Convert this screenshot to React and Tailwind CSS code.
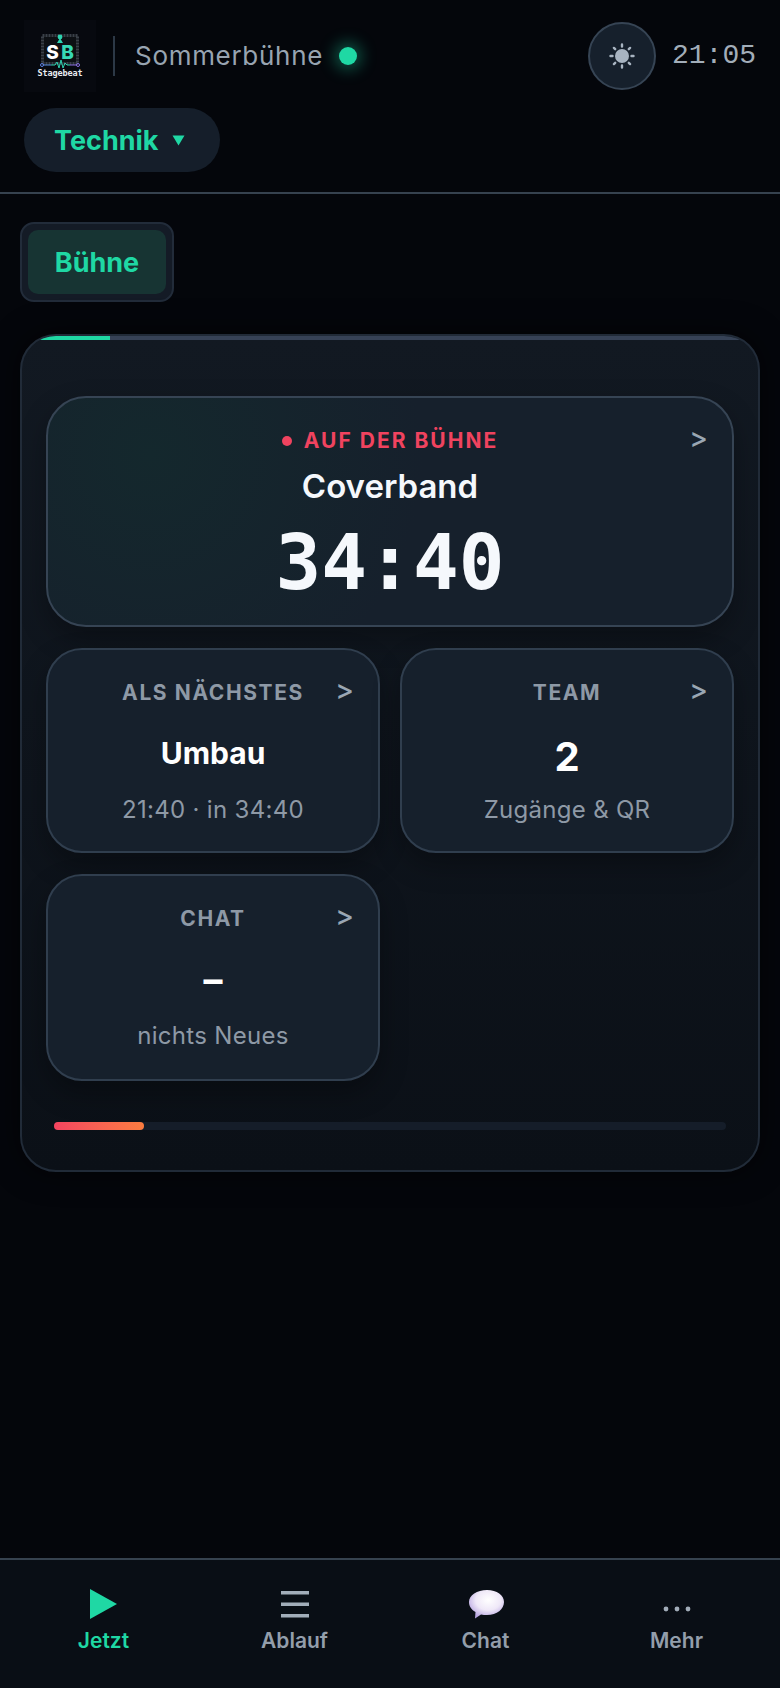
import React from 'react';

const sans = 'font-["Inter","Liberation_Sans",sans-serif]';

function Logo() {
    return (
        <div className="w-[72px] h-[72px] bg-[#07090f] flex items-center justify-center">
            <svg width="72" height="72" viewBox="0 0 72 72">
                <rect x="18.5" y="15.5" width="35" height="28" fill="#0d1014" stroke="#3a4048" strokeWidth="3" strokeDasharray="2 1" />
                <circle cx="36" cy="17" r="2.4" fill="#2dd4b0" />
                <path d="M33 23 L36 18 L39 23 Z" fill="#2dd4b0" />
                <text x="28.5" y="39" fontSize="19" fontWeight="800" fill="#ffffff" textAnchor="middle" fontFamily="Inter, sans-serif">S</text>
                <text x="43.5" y="39" fontSize="19" fontWeight="800" fill="#37d8b5" textAnchor="middle" fontFamily="Inter, sans-serif">B</text>
                <path d="M27 45 H31 L33 42 L35 48 L37 40 L39 48 L41 43 L43 45 H46" fill="none" stroke="#2dd4b0" strokeWidth="1" />
                <path d="M19 45 H27" stroke="#5b8fe0" strokeWidth="1" />
                <path d="M46 45 H53" stroke="#8a6fe0" strokeWidth="1" />
                <circle cx="18" cy="45" r="1.5" fill="none" stroke="#5b7fe0" />
                <circle cx="54" cy="45" r="1.5" fill="none" stroke="#8a6fe0" />
                <text x="36" y="56" fontSize="8.5" fontWeight="700" fill="#e8ecef" textAnchor="middle" fontFamily="'DejaVu Sans Mono', monospace" textLength="45">Stagebeat</text>
            </svg>
        </div>
    );
}

function SunIcon() {
    return (
        <svg width="26" height="26" viewBox="0 0 26 26" fill="none" stroke="#a8b4c1" strokeWidth="2.4" strokeLinecap="round">
            <circle cx="13" cy="13" r="7" fill="#a8b4c1" stroke="none" />
            <path d="M13 1.5V3.5M13 22.5V24.5M1.5 13H3.5M22.5 13H24.5M4.9 4.9L6.2 6.2M19.8 19.8L21.1 21.1M4.9 21.1L6.2 19.8M19.8 6.2L21.1 4.9" />
        </svg>
    );
}

function Arrow() {
    return <span className="absolute right-[24px] top-[24px] text-[28px] leading-[32px] font-medium text-[#9aa6b3]">&gt;</span>;
}

function SmallCard({ label, value, sub, valueClass, className }) {
    return (
        <div className={`relative rounded-[36px] border-2 border-[#303e4e] bg-[#16202c] flex flex-col items-center pt-[29px] shadow-[0_12px_28px_rgba(0,0,0,0.3)] ${className}`}>
            <Arrow />
            <div className="text-[21px] leading-[28px] font-bold tracking-[1.6px] text-[#8e99a6]">{label}</div>
            <div className={`mt-[21px] h-[50px] leading-[50px] font-bold text-white ${valueClass}`}>{value}</div>
            <div className="mt-[18px] text-[24px] leading-[28px] tracking-[0.3px] text-[#8e99a6]">{sub}</div>
        </div>
    );
}

function NavItem({ icon, label, active }) {
    return (
        <div className="flex-1 flex flex-col items-center">
            <div className="h-[36px] flex items-center justify-center">{icon}</div>
            <div className={`mt-[6px] text-[21px] leading-[26px] font-semibold ${active ? 'text-[#1fd8a4]' : 'text-[#939eab]'}`}>{label}</div>
        </div>
    );
}

export default function App() {
    return (
        <div className={`w-[780px] h-[1688px] bg-[#04060b] flex flex-col ${sans}`}>
            {/* header */}
            <header className="border-b-2 border-[#36424f] h-[194px] shrink-0 px-[24px] pt-[20px]">
                <div className="flex items-center h-[72px]">
                    <Logo />
                    <div className="ml-[17px] w-[2px] h-[40px] bg-[#2c3846]" />
                    <span className="ml-[20px] text-[26px] leading-[32px] tracking-[0.7px] text-[#98a4b1]">Sommerbühne</span>
                    <span className="ml-[16px] w-[18px] h-[18px] rounded-full bg-[#1fd8a4] shadow-[0_0_16px_4px_rgba(31,216,164,0.4)]" />
                    <button className="ml-auto w-[68px] h-[68px] rounded-full border-2 border-[#364454] bg-[#16202c] flex items-center justify-center">
                        <SunIcon />
                    </button>
                    <span className="ml-[16px] font-['Liberation_Mono',monospace] text-[28px] text-[#a2adb9]">21:05</span>
                </div>
                <button className="mt-[16px] h-[64px] w-[196px] rounded-full bg-[#151e2a] flex items-center pl-[30px]">
                    <span className="text-[27px] pt-[2px] font-bold text-[#1fd8a4]">Technik</span>
                    <svg className="ml-[14px]" width="13" height="11" viewBox="0 0 13 11">
                        <path d="M0.5 0.5H12.5L6.5 10.5Z" fill="#1fd8a4" />
                    </svg>
                </button>
            </header>

            {/* tab */}
            <div className="pl-[20px] pt-[28px]">
                <div className="w-[154px] h-[80px] rounded-[14px] border-2 border-[#222c3a] bg-[#141b26] p-[6px]">
                    <div className="h-full pt-[2px] rounded-[10px] bg-[#173433] flex items-center justify-center text-[27px] font-bold text-[#1fd8a4]">
                        Bühne
                    </div>
                </div>
            </div>

            {/* main card */}
            <main className="relative mt-[32px] mx-[20px] h-[838px] rounded-[36px] border-2 border-[#212b38] bg-gradient-to-b from-[#121922] to-[#0b1017] px-[24px] pt-[60px] overflow-hidden shadow-[0_0_30px_rgba(0,0,0,0.6)]">
                <div className="absolute top-0 left-0 right-0 h-[4px] bg-[#364256]">
                    <div className="h-full w-[88px] bg-[#1fd8a4]" />
                </div>

                <div className="grid grid-cols-2 gap-x-[20px] gap-y-[21px]">
                    <div className="relative col-span-2 h-[231px] rounded-[40px] border-2 border-[#364454] bg-[radial-gradient(circle_at_15%_25%,#14282d_0%,#16202c_45%)] flex flex-col items-center pt-[29px] shadow-[0_12px_28px_rgba(0,0,0,0.3)]">
                        <Arrow />
                        <div className="flex items-center text-[21px] leading-[28px] font-bold tracking-[2px] text-[#f0435f]">
                            <span className="w-[10px] h-[10px] rounded-full bg-[#f0435f] mr-[12px]" />
                            AUF DER BÜHNE
                        </div>
                        <div className="mt-[9px] text-[33px] leading-[44px] font-semibold text-[#f5f8fc]">Coverband</div>
                        <div className="mt-[10px] font-['DejaVu_Sans_Mono',monospace] font-bold text-[76px] leading-[90px] text-[#f5f8fc]">34:40</div>
                    </div>

                    <SmallCard className="h-[205px]" label="ALS NÄCHSTES" value="Umbau" sub="21:40 · in 34:40" valueClass="text-[30px]" />
                    <SmallCard className="h-[205px]" label="TEAM" value="2" sub="Zugänge & QR" valueClass="text-[40px] pt-[4px]" />
                    <SmallCard className="h-[207px]" label="CHAT" value="–" sub="nichts Neues" valueClass="text-[38px]" />
                </div>

                <div className="mt-[41px] mx-[8px] h-[8px] rounded-full bg-[#151d29]">
                    <div className="h-full w-[90px] rounded-full bg-gradient-to-r from-[#f5435f] to-[#fb7c3f]" />
                </div>
            </main>

            {/* bottom nav */}
            <nav className="mt-auto h-[130px] border-t-2 border-[#36424f] bg-[#090e15] flex px-[8px] pt-[26px]">
                <NavItem
                    active
                    label="Jetzt"
                    icon={
                        <svg width="28" height="32" viewBox="0 0 28 32">
                            <path d="M0 1L27 16L0 31Z" fill="#1fd8a4" />
                        </svg>
                    }
                />
                <NavItem
                    label="Ablauf"
                    icon={
                        <svg width="28" height="28" viewBox="0 0 28 28" fill="#a2adb9">
                            <rect y="1" width="28" height="3.5" />
                            <rect y="12.5" width="28" height="3.5" />
                            <rect y="24" width="28" height="3.5" />
                        </svg>
                    }
                />
                <NavItem
                    label="Chat"
                    icon={
                        <svg width="38" height="30" viewBox="0 0 38 30">
                            <defs>
                                <radialGradient id="bubble" cx="55%" cy="35%" r="65%">
                                    <stop offset="0%" stopColor="#ffffff" />
                                    <stop offset="55%" stopColor="#efe8f8" />
                                    <stop offset="100%" stopColor="#b7a4e0" />
                                </radialGradient>
                            </defs>
                            <path d="M20 1C30 1 37 6 37 13C37 20 30 26 20 26C18 26 16 26 14 25.5L8 29.5L8.5 23C4 20.5 2 17 2 13C2 6 10 1 20 1Z" fill="url(#bubble)" />
                        </svg>
                    }
                />
                <NavItem
                    label="Mehr"
                    icon={
                        <svg width="28" height="28" viewBox="0 0 28 28" fill="#a2adb9">
                            <circle cx="3" cy="19" r="2.4" />
                            <circle cx="14" cy="19" r="2.4" />
                            <circle cx="25" cy="19" r="2.4" />
                        </svg>
                    }
                />
            </nav>
        </div>
    );
}
